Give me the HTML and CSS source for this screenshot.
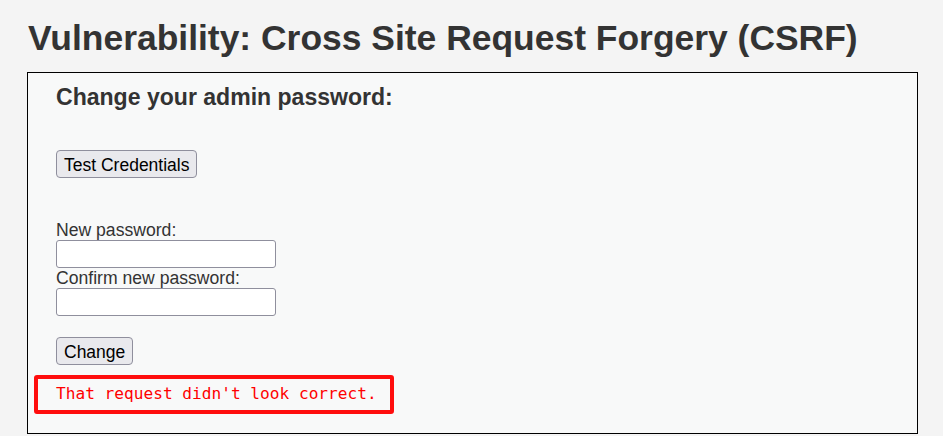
FILE: index.html
```html
<!DOCTYPE html>
<html lang="en">
<head>
    <meta charset="UTF-8">
    <meta name="viewport" content="width=device-width, initial-scale=1.0">
    <title>Vulnerability: Cross Site Request Forgery (CSRF)</title>
    <link rel="stylesheet" href="styles.css">
</head>
<body>
    <h1 class="page-title">Vulnerability: Cross Site Request Forgery (CSRF)</h1>

    <div class="code-area">
        <h3 class="form-title">Change your admin password:</h3>
        <form action="#" method="GET">
            <button type="button" class="btn test-btn">Test Credentials</button>
            <label for="password_new" class="field-label first">New password:</label>
            <input type="password" id="password_new" class="field">
            <label for="password_conf" class="field-label">Confirm new password:</label>
            <input type="password" id="password_conf" class="field">
            <button type="submit" class="btn change-btn">Change</button>
        </form>
        <pre class="message">That request didn't look correct.</pre>
    </div>
</body>
</html>
```

FILE: styles.css
```css
body {
    margin: 0;
    padding: 0 25px 0 27px;
    background-color: #f4f4f4;
    font-family: "Liberation Sans", Arial, sans-serif;
    color: #333;
}
.page-title {
    margin: 18px 0 14px 1px;
    font-size: 35.45px;
    line-height: 40px;
    font-weight: bold;
    color: #333;
}
.code-area {
    background-color: #f8f9f9;
    border: 1px solid #000;
    padding: 11px 28px 19px 28px;
}
.form-title {
    margin: 0;
    font-size: 23.05px;
    line-height: 26px;
    font-weight: bold;
    color: #333;
}
.btn {
    display: block;
    height: 28px;
    padding: 5px 7px 3px 7px;
    font-family: "Liberation Sans", Arial, sans-serif;
    font-size: 17.5px;
    line-height: 18px;
    color: #000;
    background-color: #e9e9ed;
    border: 1px solid #8f8f9d;
    border-radius: 4px;
}
.test-btn {
    margin-top: 40px;
}
.change-btn {
    margin-top: 21px;
}
.field-label {
    display: block;
    font-size: 17.6px;
    line-height: 20px;
    color: #333;
}
.field-label.first {
    margin-top: 42px;
}
.field {
    display: block;
    box-sizing: border-box;
    width: 220px;
    height: 28px;
    margin: 0;
    background-color: #fff;
    border: 1px solid #8f8f9d;
    border-radius: 3px;
}
.message {
    box-sizing: border-box;
    width: 360px;
    height: 39px;
    margin: 10px 0 0 -22px;
    padding: 5px 0 5px 18px;
    border: 4px solid #ff0d0d;
    border-radius: 3px;
    font-family: "DejaVu Sans Mono", "Liberation Mono", monospace;
    font-size: 16.15px;
    line-height: 20px;
    color: #f00;
}
```
